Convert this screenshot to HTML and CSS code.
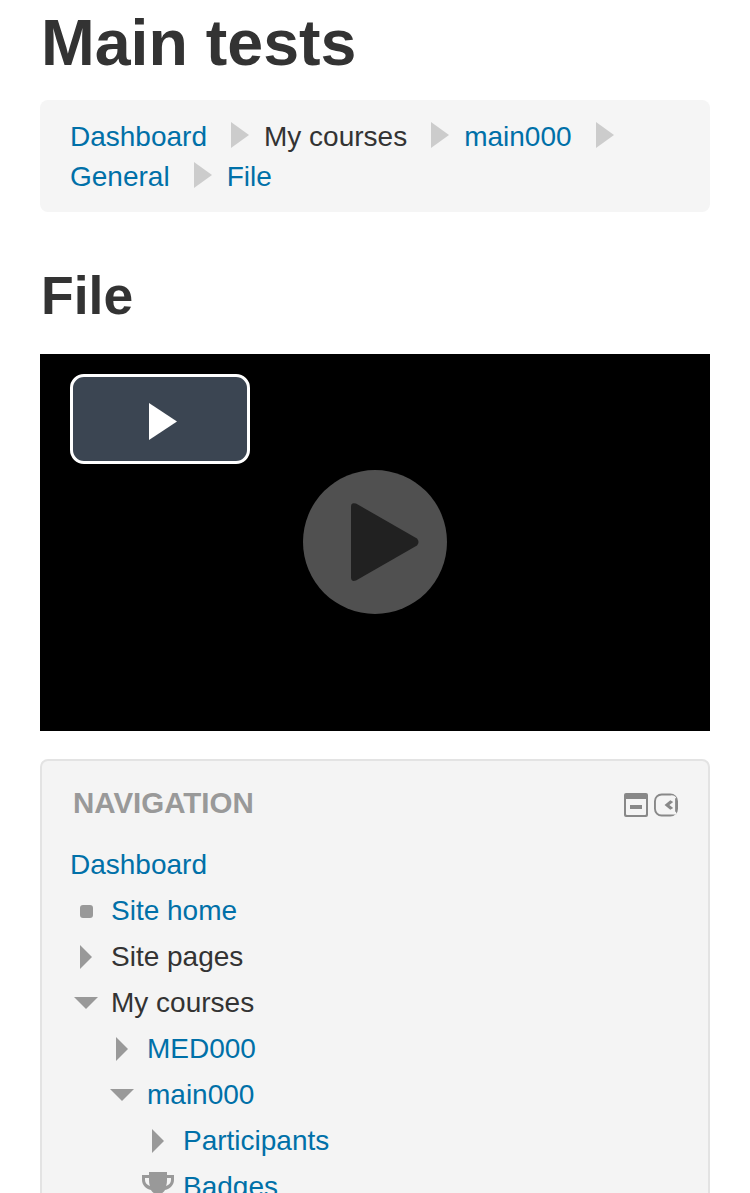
FILE: index.html
```html
<!DOCTYPE html>
<html lang="en">
<head>
    <meta charset="UTF-8">
    <meta name="viewport" content="width=device-width, initial-scale=1.0">
    <title>File</title>
    <link rel="stylesheet" href="styles.css">
</head>
<body>
    <div class="page">
        <h1 class="course-title">Main tests</h1>

        <div class="breadcrumb">
            <a href="#">Dashboard</a><svg class="crumb-sep" viewBox="0 0 18 26"><path d="M0 0 18 13 0 26z"/></svg><span>My courses</span><svg class="crumb-sep" viewBox="0 0 18 26"><path d="M0 0 18 13 0 26z"/></svg><a href="#">main000</a><svg class="crumb-sep" viewBox="0 0 18 26"><path d="M0 0 18 13 0 26z"/></svg>
            <a href="#">General</a><svg class="crumb-sep" viewBox="0 0 18 26"><path d="M0 0 18 13 0 26z"/></svg><a href="#">File</a>
        </div>

        <h2 class="page-title">File</h2>

        <div class="video">
            <div class="video-btn">
                <svg class="video-btn-icon" viewBox="0 0 28 37"><path d="M0 0 28 18.5 0 37z"/></svg>
            </div>
            <div class="video-big">
                <svg class="video-big-icon" viewBox="0 0 68 78"><path d="M5 0.5 66 35.500q3 3.500 0 7L5 77.500q-5 1.500-5-3V3.500q0-4.500 5-3z"/></svg>
            </div>
        </div>

        <div class="block">
            <div class="block-head">
                <h3 class="block-title">NAVIGATION</h3>
                <div class="block-actions">
                    <svg class="action-icon" viewBox="0 0 24 24"><path fill-rule="evenodd" d="M2 0h20a2 2 0 0 1 2 2v20a2 2 0 0 1-2 2H2a2 2 0 0 1-2-2V2a2 2 0 0 1 2-2zM2 6v15a1 1 0 0 0 1 1h18a1 1 0 0 0 1-1V6zM6 12h12v4H6z"/></svg>
                    <svg class="action-icon" viewBox="0 0 25 24"><path fill-rule="evenodd" d="M8 0h9a8 8 0 0 1 8 8v8a8 8 0 0 1-8 8H8a8 8 0 0 1-8-8V8a8 8 0 0 1 8-8zM8 2a6 6 0 0 0-6 6v8a6 6 0 0 0 6 6h15V19h-1V5h1V4a6 6 0 0 0-6-2zM17 7l3 2-4 3 4 3-3 2-6-5z"/></svg>
                </div>
            </div>

            <ul class="tree">
                <li class="row"><a href="#">Dashboard</a></li>
                <li class="row row-1"><i class="icon-dot"></i><a href="#">Site home</a></li>
                <li class="row row-1">
                    <svg class="icon-closed" viewBox="0 0 12 24"><path d="M0 0 12 12 0 24z"/></svg>
                    <span>Site pages</span>
                </li>
                <li class="row row-1">
                    <svg class="icon-open" viewBox="0 0 24 12"><path d="M0 0H24L12 12z"/></svg>
                    <span>My courses</span>
                </li>
                <li class="row row-2">
                    <svg class="icon-closed" viewBox="0 0 12 24"><path d="M0 0 12 12 0 24z"/></svg>
                    <a href="#">MED000</a>
                </li>
                <li class="row row-2">
                    <svg class="icon-open" viewBox="0 0 24 12"><path d="M0 0H24L12 12z"/></svg>
                    <a href="#">main000</a>
                </li>
                <li class="row row-3">
                    <svg class="icon-closed" viewBox="0 0 12 24"><path d="M0 0 12 12 0 24z"/></svg>
                    <a href="#">Participants</a>
                </li>
                <li class="row row-3">
                    <svg class="icon-badge" viewBox="0 0 32 32"><path fill-rule="evenodd" d="M7 0h18v3h7v5c0 5-4 9-9 10-1 2-3 3-4 4v4h4v5H9v-5h4v-4c-1-1-3-2-4-4C4 17 0 13 0 8V3h7zM3 6v2c0 3 2 5 5 6-1-2-1-5-1-8zM29 6h-4c0 3 0 6-1 8 3-1 5-3 5-6z"/></svg>
                    <a href="#">Badges</a>
                </li>
            </ul>
        </div>
    </div>
</body>
</html>
```

FILE: styles.css
```css
html, body {
    margin: 0;
    height: 1193px;
    overflow: hidden;
    background: #fff;
}
body {
    font-family: "Liberation Sans", Arial, sans-serif;
    font-size: 28px;
    line-height: 40px;
    color: #333;
}
a {
    color: #0070a8;
    text-decoration: none;
}
ul {
    list-style: none;
    margin: 0;
    padding: 0;
}
.page {
    padding: 0 40px;
}
.course-title {
    margin: 0 0 0 1px;
    padding-top: 8px;
    height: 100px;
    box-sizing: border-box;
    font-size: 64.5px;
    line-height: 70px;
    font-weight: bold;
}
.breadcrumb {
    box-sizing: border-box;
    height: 112px;
    padding: 17px 30px;
    background: #f5f5f5;
    border-radius: 8px;
}
.crumb-sep {
    width: 18px;
    height: 26px;
    margin: 0 15px 0 24px;
    vertical-align: -2px;
    fill: #ccc;
}
.page-title {
    margin: 0 0 0 1px;
    height: 142px;
    box-sizing: border-box;
    padding-top: 56px;
    font-size: 53.5px;
    line-height: 56px;
    font-weight: bold;
}
.video {
    position: relative;
    height: 377px;
    background: #000;
    margin-bottom: 28px;
}
.video-btn {
    position: absolute;
    left: 30px;
    top: 20px;
    box-sizing: border-box;
    width: 180px;
    height: 90px;
    border: 3px solid #fff;
    border-radius: 14px;
    background: #3b4552;
    display: flex;
    align-items: center;
    justify-content: center;
}
.video-btn-icon {
    width: 28px;
    height: 37px;
    margin: 4px 0 0 6px;
    fill: #fff;
}
.video-big {
    position: absolute;
    left: 263px;
    top: 116px;
    width: 144px;
    height: 144px;
    border-radius: 50%;
    background: #505050;
    display: flex;
    align-items: center;
    justify-content: center;
}
.video-big-icon {
    width: 68px;
    height: 78px;
    margin-left: 19px;
    fill: #212121;
}
.block {
    box-sizing: border-box;
    height: 500px;
    padding: 0 30px 0 28px;
    background: #f4f4f4;
    border: 2px solid #e3e3e3;
    border-radius: 8px;
}
.block-head {
    display: flex;
    justify-content: space-between;
    align-items: center;
    height: 81px;
}
.block-title {
    margin: 2px 0 0 3px;
    font-size: 29.5px;
    font-weight: bold;
    color: #999;
}
.block-actions {
    display: flex;
    gap: 6px;
    margin-top: 6px;
}
.action-icon {
    width: 24px;
    height: 24px;
    fill: #888;
}
.row {
    position: relative;
    height: 46px;
    line-height: 46px;
}
.row-1 { padding-left: 41px; }
.row-2 { padding-left: 77px; }
.row-3 { padding-left: 113px; }
.row svg, .icon-dot {
    position: absolute;
}
.icon-dot {
    left: 10px;
    top: 17px;
    width: 13px;
    height: 13px;
    border-radius: 3px;
    background: #999;
}
.icon-closed {
    width: 12px;
    height: 24px;
    top: 11px;
    fill: #999;
}
.icon-open {
    width: 24px;
    height: 12px;
    top: 17px;
    fill: #999;
}
.row-1 .icon-closed { left: 10px; }
.row-1 .icon-open { left: 4px; }
.row-2 .icon-closed { left: 46px; }
.row-2 .icon-open { left: 40px; }
.row-3 .icon-closed { left: 82px; }
.icon-badge {
    left: 72px;
    top: 8px;
    width: 32px;
    height: 32px;
    fill: #999;
}
```
